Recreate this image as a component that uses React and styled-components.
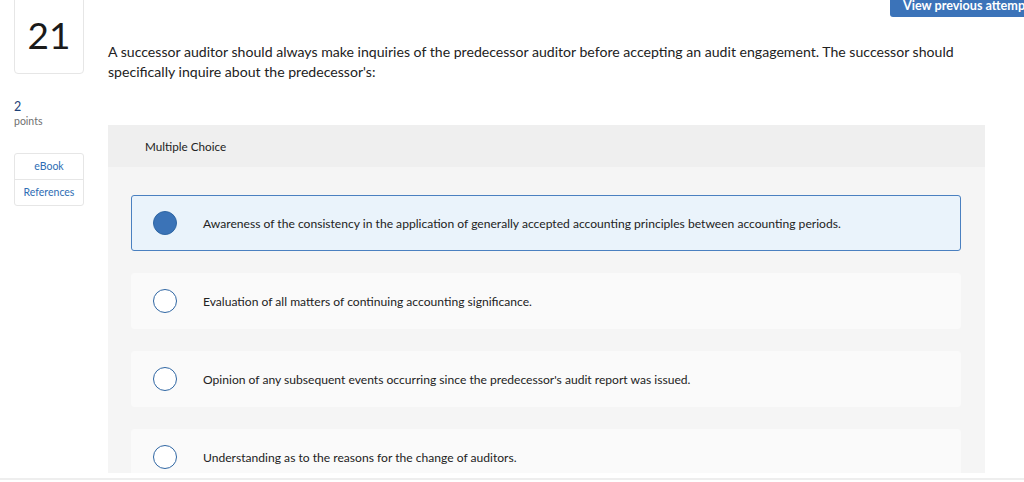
import React from 'react';
import styled, { createGlobalStyle } from 'styled-components';

const GlobalStyle = createGlobalStyle`
  html, body { margin: 0; padding: 0; background: #fff; }
  body { font-family: Lato, "Open Sans", "Liberation Sans", sans-serif; color: #222; overflow: hidden; }
`;

const options = [
  'Awareness of the consistency in the application of generally accepted accounting principles between accounting periods.',
  'Evaluation of all matters of continuing accounting significance.',
  "Opinion of any subsequent events occurring since the predecessor's audit report was issued.",
  'Understanding as to the reasons for the change of auditors.',
];

const Screen = styled.div`
  position: relative;
  width: 1024px;
  height: 482px;
  overflow: hidden;
`;

const Viewport = styled.div`
  height: 473px;
  overflow: hidden;
  display: flex;
  border-bottom: 5px solid #fff;
  box-shadow: 0 2px 0 #eeeeee;
`;

const Sidebar = styled.aside`
  width: 70px;
  padding-left: 14px;
  margin-right: 24px;
  display: flex;
  flex-direction: column;
`;

const NumberBox = styled.div`
  margin-top: -10px;
  height: 84px;
  border: 1px solid #e6e6e6;
  border-radius: 4px;
  display: flex;
  align-items: center;
  justify-content: center;
  font-size: 37px;
  color: #1a1a1a;
  padding-top: 4px;
  box-sizing: border-box;
`;

const Points = styled.div`
  margin-top: 25px;
  font-size: 12.5px;
  color: #1c4178;
  line-height: 15px;
`;

const PointsLabel = styled.div`
  font-size: 10.5px;
  color: #707070;
  line-height: 14px;
`;

const Resources = styled.div`
  margin-top: 25px;
  border: 1px solid #e6e6e6;
  border-radius: 3px;
`;

const ResourceLink = styled.a`
  display: block;
  height: 25px;
  line-height: 25px;
  text-align: center;
  font-size: 10.5px;
  color: #2e6db4;
  text-decoration: none;
  & + & { border-top: 1px solid #e6e6e6; }
`;

const Main = styled.main`
  width: 877px;
  display: flex;
  flex-direction: column;
`;

const Question = styled.p`
  margin: 42px 0 0;
  font-size: 14.1px;
  line-height: 20px;
  color: #222;
  padding-right: 20px;
`;

const Panel = styled.section`
  margin-top: 43px;
  flex: 1;
  background: #f5f5f5;
`;

const PanelHeader = styled.div`
  height: 42px;
  background: #efefef;
  padding-left: 37px;
  display: flex;
  align-items: center;
  font-size: 11.7px;
  color: #222;
`;

const OptionList = styled.div`
  padding: 28px 24px 0 23px;
  display: flex;
  flex-direction: column;
  gap: 22px;
`;

const Option = styled.label`
  height: 56px;
  box-sizing: border-box;
  display: flex;
  align-items: center;
  padding-left: 21px;
  border-radius: 3px;
  background: ${p => (p.selected ? '#eaf3fb' : '#fafafa')};
  border: 1px solid ${p => (p.selected ? '#4a80c0' : '#fafafa')};
  cursor: pointer;
`;

const Radio = styled.span`
  width: 24px;
  height: 24px;
  box-sizing: border-box;
  border-radius: 50%;
  flex-shrink: 0;
  border: 1.5px solid #2f66a3;
  background: ${p => (p.selected ? '#3b73b7' : '#fff')};
`;

const OptionText = styled.span`
  margin-left: 26px;
  font-size: 12.1px;
  color: #222;
`;

const AttemptButton = styled.button`
  position: absolute;
  top: -12px;
  left: 890px;
  width: 170px;
  height: 29px;
  padding: 6px 0 0 13px;
  line-height: 13px;
  text-align: left;
  border: none;
  border-radius: 3px;
  background: #3b73b9;
  color: #fff;
  font-family: Lato, "Liberation Sans", sans-serif;
  font-weight: 700;
  font-size: 12.6px;
  white-space: nowrap;
`;

export default function App() {
  return (
    <>
      <GlobalStyle />
      <Screen>
        <Viewport>
          <Sidebar>
            <NumberBox>21</NumberBox>
            <Points>2</Points>
            <PointsLabel>points</PointsLabel>
            <Resources>
              <ResourceLink href="#">eBook</ResourceLink>
              <ResourceLink href="#">References</ResourceLink>
            </Resources>
          </Sidebar>
          <Main>
            <Question>
              A successor auditor should always make inquiries of the predecessor auditor before accepting an audit
              engagement. The successor should specifically inquire about the predecessor's:
            </Question>
            <Panel>
              <PanelHeader>Multiple Choice</PanelHeader>
              <OptionList>
                {options.map((text, i) => (
                  <Option key={i} selected={i === 0}>
                    <Radio selected={i === 0} />
                    <OptionText>{text}</OptionText>
                  </Option>
                ))}
              </OptionList>
            </Panel>
          </Main>
        </Viewport>
        <AttemptButton>View previous attempt</AttemptButton>
      </Screen>
    </>
  );
}
